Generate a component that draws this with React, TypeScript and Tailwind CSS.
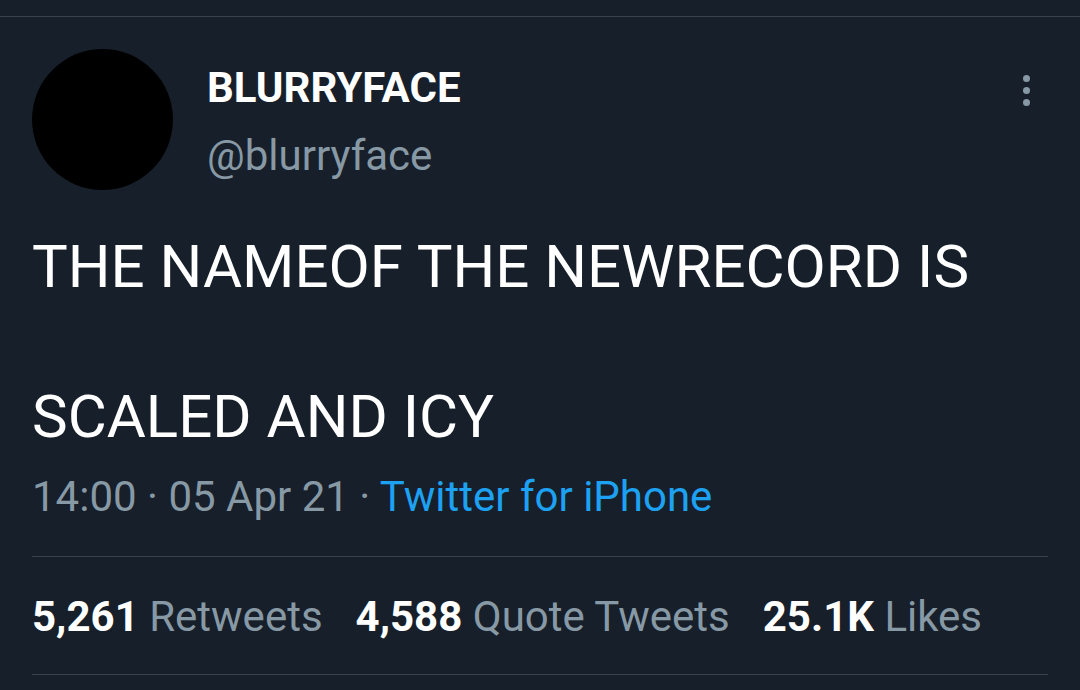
import React from "react";

export default function App() {
  return (
    <div
      className="w-[1080px] h-[690px] bg-[#17202a] overflow-hidden text-white"
      style={{ fontFamily: "Roboto, 'Liberation Sans', sans-serif" }}
    >
      <div className="mt-[16px] h-px bg-[#38444d]" />
      <div className="pl-[32px] pr-[32px]">
        <div className="flex pt-[32px]">
          <div className="w-[141px] h-[141px] rounded-full bg-black shrink-0" />
          <div className="ml-[34px] flex-1 pt-[15px]">
            <div className="text-[42px] leading-[48px] font-bold">BLURRYFACE</div>
            <div className="text-[42px] leading-[48px] text-[#8899a6] mt-[20px]">@blurryface</div>
          </div>
          <div className="flex flex-col gap-[5px] pt-[26px] pr-[18px]">
            <div className="w-[7px] h-[7px] rounded-full bg-[#8899a6]" />
            <div className="w-[7px] h-[7px] rounded-full bg-[#8899a6]" />
            <div className="w-[7px] h-[7px] rounded-full bg-[#8899a6]" />
          </div>
        </div>
        <div className="mt-[39px] text-[60px] leading-[75px] whitespace-pre-line">
          {"THE NAMEOF THE NEWRECORD IS\n\nSCALED AND ICY"}
        </div>
        <div className="mt-[18px] text-[42px] leading-[50px] text-[#8899a6]">
          14:00 · 05 Apr 21 · <span className="text-[#1da1f2]">Twitter for iPhone</span>
        </div>
        <div className="mt-[34px] h-px bg-[#38444d]" />
        <div className="flex gap-[33px] pt-[36px] pb-[33px] text-[42px] leading-[48px]">
          <div><span className="font-bold">5,261</span> <span className="text-[#8899a6]">Retweets</span></div>
          <div><span className="font-bold">4,588</span> <span className="text-[#8899a6]">Quote Tweets</span></div>
          <div><span className="font-bold">25.1K</span> <span className="text-[#8899a6]">Likes</span></div>
        </div>
        <div className="h-px bg-[#38444d]" />
      </div>
    </div>
  );
}
